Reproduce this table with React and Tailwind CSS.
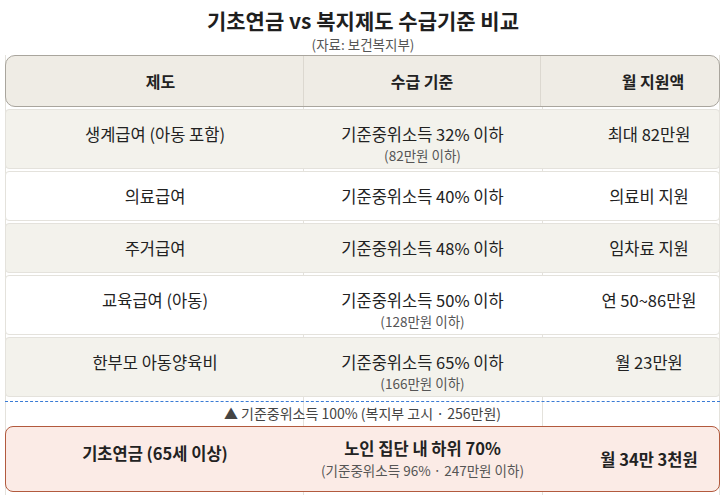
const rows = [
  { name: '생계급여 (아동 포함)', crit: '기준중위소득 32% 이하', sub: '(82만원 이하)', amount: '최대 82만원', shade: true },
  { name: '의료급여', crit: '기준중위소득 40% 이하', amount: '의료비 지원', shade: false },
  { name: '주거급여', crit: '기준중위소득 48% 이하', amount: '임차료 지원', shade: true },
  { name: '교육급여 (아동)', crit: '기준중위소득 50% 이하', sub: '(128만원 이하)', amount: '연 50~86만원', shade: false },
  { name: '한부모 아동양육비', crit: '기준중위소득 65% 이하', sub: '(166만원 이하)', amount: '월 23만원', shade: true },
]

function Row({ row }) {
  const h = row.sub ? 'h-[60px]' : 'h-[50px]'
  const bg = row.shade ? 'bg-[#f3f2ec]' : 'bg-white'
  return (
    <div className={`grid grid-cols-[298px_237px_1fr] items-start pt-[12px] ${h} ${bg} rounded-[4px] border border-[#e4e2dc] text-[16.5px] leading-[24px] text-[#222]`}>
      <div className="text-center">{row.name}</div>
      <div className="flex flex-col items-center">
        <div>{row.crit}</div>
        {row.sub && <div className="text-[13.5px] leading-[20px] -mt-[1px] text-[#555]">{row.sub}</div>}
      </div>
      <div className="pl-[38px] text-center">{row.amount}</div>
    </div>
  )
}

export default function App() {
  return (
    <div className="w-[726px] h-[495px] overflow-hidden bg-white font-['Noto_Sans_CJK_KR','Noto_Sans',sans-serif]">
      <div className="pt-[5px] text-center">
        <h1 className="text-[21px] leading-[30px] font-bold text-[#1f1f1f]">기초연금 vs 복지제도 수급기준 비교</h1>
        <p className="text-[13.5px] leading-[20px] -mt-[1px] text-[#555]">(자료: 보건복지부)</p>
      </div>

      <div className="mt-[1px] ml-[5px] mr-[6px] flex flex-col gap-[2px] bg-[linear-gradient(to_right,#e4e2dc_0,#e4e2dc_1px,transparent_1px,transparent_298px,#e4e2dc_298px,#e4e2dc_299px,transparent_299px,transparent_537px,#e4e2dc_537px,#e4e2dc_538px,transparent_538px,transparent_calc(100%-1px),#e4e2dc_calc(100%-1px))]">
        <div className="grid grid-cols-[298px_237px_1fr] items-center h-[52px] rounded-[10px] border border-[#a9a59d] bg-[#efece5] text-[16px] font-bold text-[#222]">
          <div className="text-center pl-[12px] h-full flex items-center justify-center border-r border-[#dcd8d0]">제도</div>
          <div className="text-center h-full flex items-center justify-center border-r border-[#dcd8d0]">수급 기준</div>
          <div className="pl-[46px] text-center">월 지원액</div>
        </div>

        {rows.map((r) => (
          <Row key={r.name} row={r} />
        ))}

        <div className="mt-[2px] border-t-[1.5px] border-dashed border-[#3a7bd5]" />
        <div className="-mt-[2px] h-[22px] flex items-center justify-center text-[14px] leading-[20px] text-[#444]">
          ▲ 기준중위소득 100% (복지부 고시 · 256만원)
        </div>

        <div className="grid grid-cols-[298px_237px_1fr] items-center h-[66px] rounded-[8px] border-[1.5px] border-[#b25a3e] bg-[#fbebe6] text-[16.5px] leading-[24px] font-bold text-[#222]">
          <div className="text-center -mt-[12px]">기초연금 (65세 이상)</div>
          <div className="flex flex-col items-center -mt-[2px]">
            <div>노인 집단 내 하위 70%</div>
            <div className="text-[13.5px] leading-[20px] font-normal text-[#555]">(기준중위소득 96% · 247만원 이하)</div>
          </div>
          <div className="pl-[38px] text-center">월 34만 3천원</div>
        </div>
        <div className="h-[6px]" />
      </div>
    </div>
  )
}
